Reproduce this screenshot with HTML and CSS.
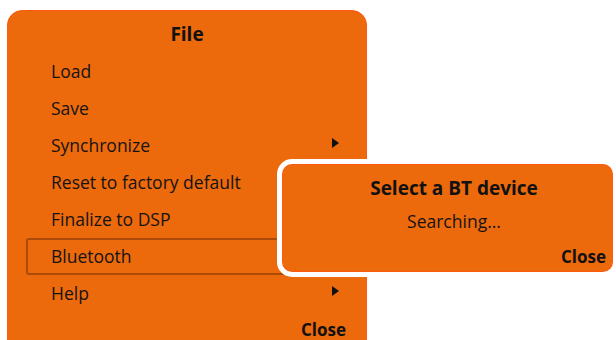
FILE: index.html
```html
<!DOCTYPE html>
<html lang="en">
<head>
  <meta charset="UTF-8">
  <title>File menu</title>
  <link rel="stylesheet" href="styles.css">
</head>
<body>
  <div class="menu">
    <div class="menu-title">File</div>
    <div class="menu-item">Load</div>
    <div class="menu-item">Save</div>
    <div class="menu-item has-sub">Synchronize <span class="arrow"></span></div>
    <div class="menu-item">Reset to factory default</div>
    <div class="menu-item">Finalize to DSP</div>
    <div class="menu-item selected">Bluetooth</div>
    <div class="menu-item has-sub">Help <span class="arrow"></span></div>
    <div class="menu-close">Close</div>
  </div>

  <div class="dialog">
    <div class="dialog-title">Select a BT device</div>
    <div class="dialog-text">Searching...</div>
    <div class="dialog-close">Close</div>
  </div>
</body>
</html>
```

FILE: styles.css
```css
html {
  overflow: hidden;
}

body {
  margin: 0;
  padding: 10px 0 0 7px;
  background: #fff;
  font-family: 'Open Sans', 'Noto Sans', sans-serif;
  color: #141414;
  width: 616px;
  height: 340px;
  box-sizing: border-box;
  overflow: hidden;
  position: relative;
}

.menu {
  width: 360px;
  height: 345px;
  background-color: #ec690c;
  border: 1px solid #ff5a10;
  border-radius: 15px;
  padding-top: 5px;
  box-sizing: border-box;
}

.menu-title {
  height: 37px;
  line-height: 37px;
  text-align: center;
  font-weight: bold;
  font-size: 19px;
  color: #111;
}

.menu-item {
  height: 37px;
  line-height: 35px;
  margin: 0 19px 0 18px;
  padding: 0 7px 0 24px;
  border: 1px solid transparent;
  border-radius: 3px;
  font-size: 17.5px;
  box-sizing: border-box;
  display: flex;
  justify-content: space-between;
  align-items: center;
}

.menu-item.selected {
  border: 2px solid #ac4a0a;
  padding-left: 23px;
}

.arrow {
  width: 0;
  height: 0;
  border-top: 5px solid transparent;
  border-bottom: 5px solid transparent;
  border-left: 7px solid #111;
  margin-top: -6px;
}

.menu-close {
  height: 34px;
  line-height: 34px;
  padding-top: 1px;
  text-align: right;
  padding-right: 20px;
  font-weight: bold;
  font-size: 17px;
  color: #111;
}

/* popup over the menu */
.dialog {
  position: absolute;
  left: 277px;
  top: 159px;
  width: 341px;
  height: 118px;
  box-sizing: border-box;
  background-color: #ec690c;
  border: 5px solid #fff;
  border-radius: 15px;
  box-shadow: inset 0 0 0 1px #ff5a10;
  padding: 8px 7px 0 20px;
  text-align: center;
}

.dialog-title {
  font-weight: bold;
  font-size: 19px;
  line-height: 32px;
  color: #111;
}

.dialog-text {
  font-size: 17.5px;
  line-height: 34px;
}

.dialog-close {
  text-align: right;
  font-weight: bold;
  font-size: 17px;
  line-height: 38px;
  color: #111;
}
```
